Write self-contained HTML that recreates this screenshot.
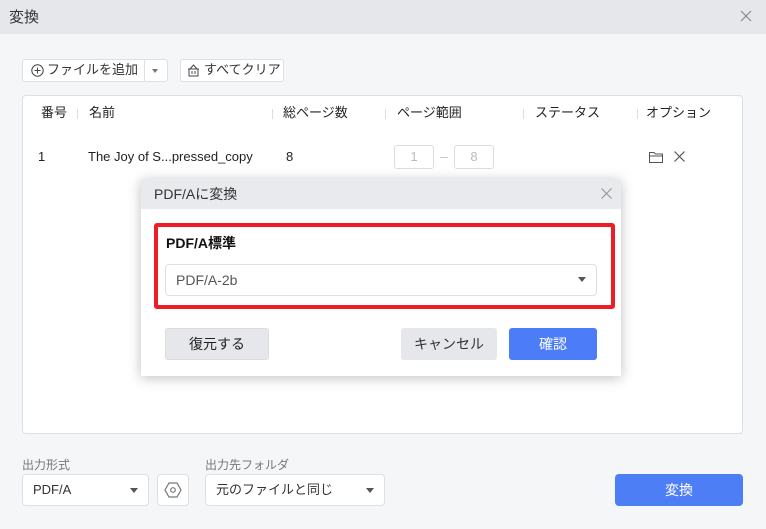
<!DOCTYPE html>
<html><head><meta charset="utf-8"><style>
*{box-sizing:border-box;margin:0;padding:0}
body{width:766px;height:529px;overflow:hidden;background:#f5f6f8;font-family:"Liberation Sans","Noto Sans CJK JP",sans-serif;color:#222;position:relative;font-size:13px;line-height:18px}
.abs{position:absolute}
.title{left:0;top:0;width:766px;height:34px;background:#e6e7eb}
.btn{background:#fff;border:1px solid #dcdfe6;border-radius:3px}
.sel{background:#fff;border:1px solid #dcdfe6;border-radius:4px}
.tri{width:0;height:0;border-left:4px solid transparent;border-right:4px solid transparent;border-top:5px solid #555}
.sep{width:1px;height:10px;background:#ddd}
</style></head><body>
<div class="abs title"></div>
<div class="abs" style="left:9px;top:9px;font-size:15px;color:#333">変換</div>
<svg class="abs" style="left:740px;top:10px" width="12" height="12"><path d="M1 1L11 11M11 1L1 11" stroke="#888" stroke-width="1.2"/></svg>

<div class="abs btn" style="left:22px;top:59px;width:146px;height:23px"></div>
<div class="abs" style="left:144px;top:60px;width:1px;height:21px;background:#dcdfe6"></div>
<svg class="abs" style="left:31px;top:64px" width="13" height="13"><circle cx="6.5" cy="6.5" r="5.7" fill="none" stroke="#444"/><path d="M6.5 3.5V9.5M3.5 6.5H9.5" stroke="#444"/></svg>
<div class="abs" style="left:47px;top:61px;color:#333">ファイルを追加</div>
<div class="abs tri" style="left:152px;top:69px;border-top-color:#777;border-left-width:3px;border-right-width:3px;border-top-width:4px"></div>
<div class="abs btn" style="left:180px;top:59px;width:104px;height:23px"></div>
<svg class="abs" style="left:187px;top:63px" width="13" height="14"><path d="M1 6H12M2 6V13H11V6M3 6L6.5 2L10 6M5 8V11M8 8V11" fill="none" stroke="#444"/></svg>
<div class="abs" style="left:204px;top:61px;color:#333">すべてクリア</div>

<div class="abs" style="left:22px;top:95px;width:721px;height:339px;background:#fff;border:1px solid #dcdfe6;border-radius:4px"></div>
<div class="abs" style="left:41px;top:104px">番号</div>
<div class="abs sep" style="left:77px;top:109px"></div>
<div class="abs" style="left:89px;top:104px">名前</div>
<div class="abs sep" style="left:272px;top:109px"></div>
<div class="abs" style="left:283px;top:104px">総ページ数</div>
<div class="abs sep" style="left:385px;top:109px"></div>
<div class="abs" style="left:397px;top:104px">ページ範囲</div>
<div class="abs sep" style="left:523px;top:109px"></div>
<div class="abs" style="left:535px;top:104px">ステータス</div>
<div class="abs sep" style="left:637px;top:109px"></div>
<div class="abs" style="left:646px;top:104px">オプション</div>

<div class="abs" style="left:38px;top:148px">1</div>
<div class="abs" style="left:88px;top:148px">The Joy of S...pressed_copy</div>
<div class="abs" style="left:286px;top:148px">8</div>
<div class="abs" style="left:394px;top:145px;width:40px;height:24px;border:1px solid #ddd;border-radius:3px;color:#bbb;text-align:center;line-height:22px">1</div>
<div class="abs" style="left:440px;top:157px;width:8px;height:1px;background:#ccc"></div>
<div class="abs" style="left:454px;top:145px;width:40px;height:24px;border:1px solid #ddd;border-radius:3px;color:#bbb;text-align:center;line-height:22px">8</div>
<svg class="abs" style="left:649px;top:151px" width="14" height="12"><path d="M0.5 1.5H5L6.5 3H13.5V11.5H0.5ZM0.5 5H13.5" fill="none" stroke="#555"/></svg>
<svg class="abs" style="left:674px;top:151px" width="11" height="11"><path d="M0.5 0.5L10.5 10.5M10.5 0.5L0.5 10.5" stroke="#555" stroke-width="1.2"/></svg>

<!-- dialog -->
<div class="abs" style="left:141px;top:179px;width:480px;height:197px;background:#fff;box-shadow:0 2px 12px rgba(0,0,0,0.25)"></div>
<div class="abs" style="left:141px;top:179px;width:480px;height:30px;background:#e8eaed"></div>
<div class="abs" style="left:154px;top:185px;font-size:14px;color:#333">PDF/Aに変換</div>
<svg class="abs" style="left:601px;top:188px" width="11" height="11"><path d="M0.5 0.5L10.5 10.5M10.5 0.5L0.5 10.5" stroke="#999" stroke-width="1.2"/></svg>
<div class="abs" style="left:154px;top:223px;width:461px;height:86px;border:4px solid #ee1c25;border-radius:3px"></div>
<div class="abs" style="left:166px;top:234px;font-weight:bold;font-size:14px;color:#111">PDF/A標準</div>
<div class="abs sel" style="left:165px;top:264px;width:432px;height:32px"></div>
<div class="abs" style="left:176px;top:271px;font-size:14px;color:#555">PDF/A-2b</div>
<div class="abs tri" style="left:578px;top:277px"></div>
<div class="abs" style="left:165px;top:328px;width:104px;height:32px;background:#e6e7eb;border:1px solid #dcdcdc;border-radius:3px;text-align:center;line-height:30px;font-size:14px">復元する</div>
<div class="abs" style="left:401px;top:328px;width:96px;height:32px;background:#e6e7eb;border-radius:3px;text-align:center;line-height:32px;font-size:14px;color:#333">キャンセル</div>
<div class="abs" style="left:509px;top:328px;width:88px;height:32px;background:#4c7cf8;border-radius:3px;text-align:center;line-height:32px;font-size:14px;color:#fff">確認</div>

<!-- bottom -->
<div class="abs" style="left:22px;top:456px;font-size:12px;color:#777">出力形式</div>
<div class="abs sel" style="left:22px;top:474px;width:127px;height:32px"></div>
<div class="abs" style="left:33px;top:481px;color:#333">PDF/A</div>
<div class="abs tri" style="left:130px;top:488px"></div>
<div class="abs sel" style="left:157px;top:474px;width:32px;height:32px"></div>
<svg class="abs" style="left:164px;top:481px" width="18" height="18"><path d="M5 2H13L17 9L13 16H5L1 9Z" fill="none" stroke="#777" stroke-width="1.2"/><circle cx="9" cy="9" r="2.3" fill="none" stroke="#777" stroke-width="1.2"/></svg>
<div class="abs" style="left:205px;top:456px;font-size:12px;color:#777">出力先フォルダ</div>
<div class="abs sel" style="left:205px;top:474px;width:180px;height:32px"></div>
<div class="abs" style="left:216px;top:481px;color:#333">元のファイルと同じ</div>
<div class="abs tri" style="left:366px;top:488px"></div>
<div class="abs" style="left:615px;top:474px;width:128px;height:32px;background:#4d7ef6;border-radius:4px;color:#fff;text-align:center;line-height:32px;font-size:14px">変換</div>
</body></html>
